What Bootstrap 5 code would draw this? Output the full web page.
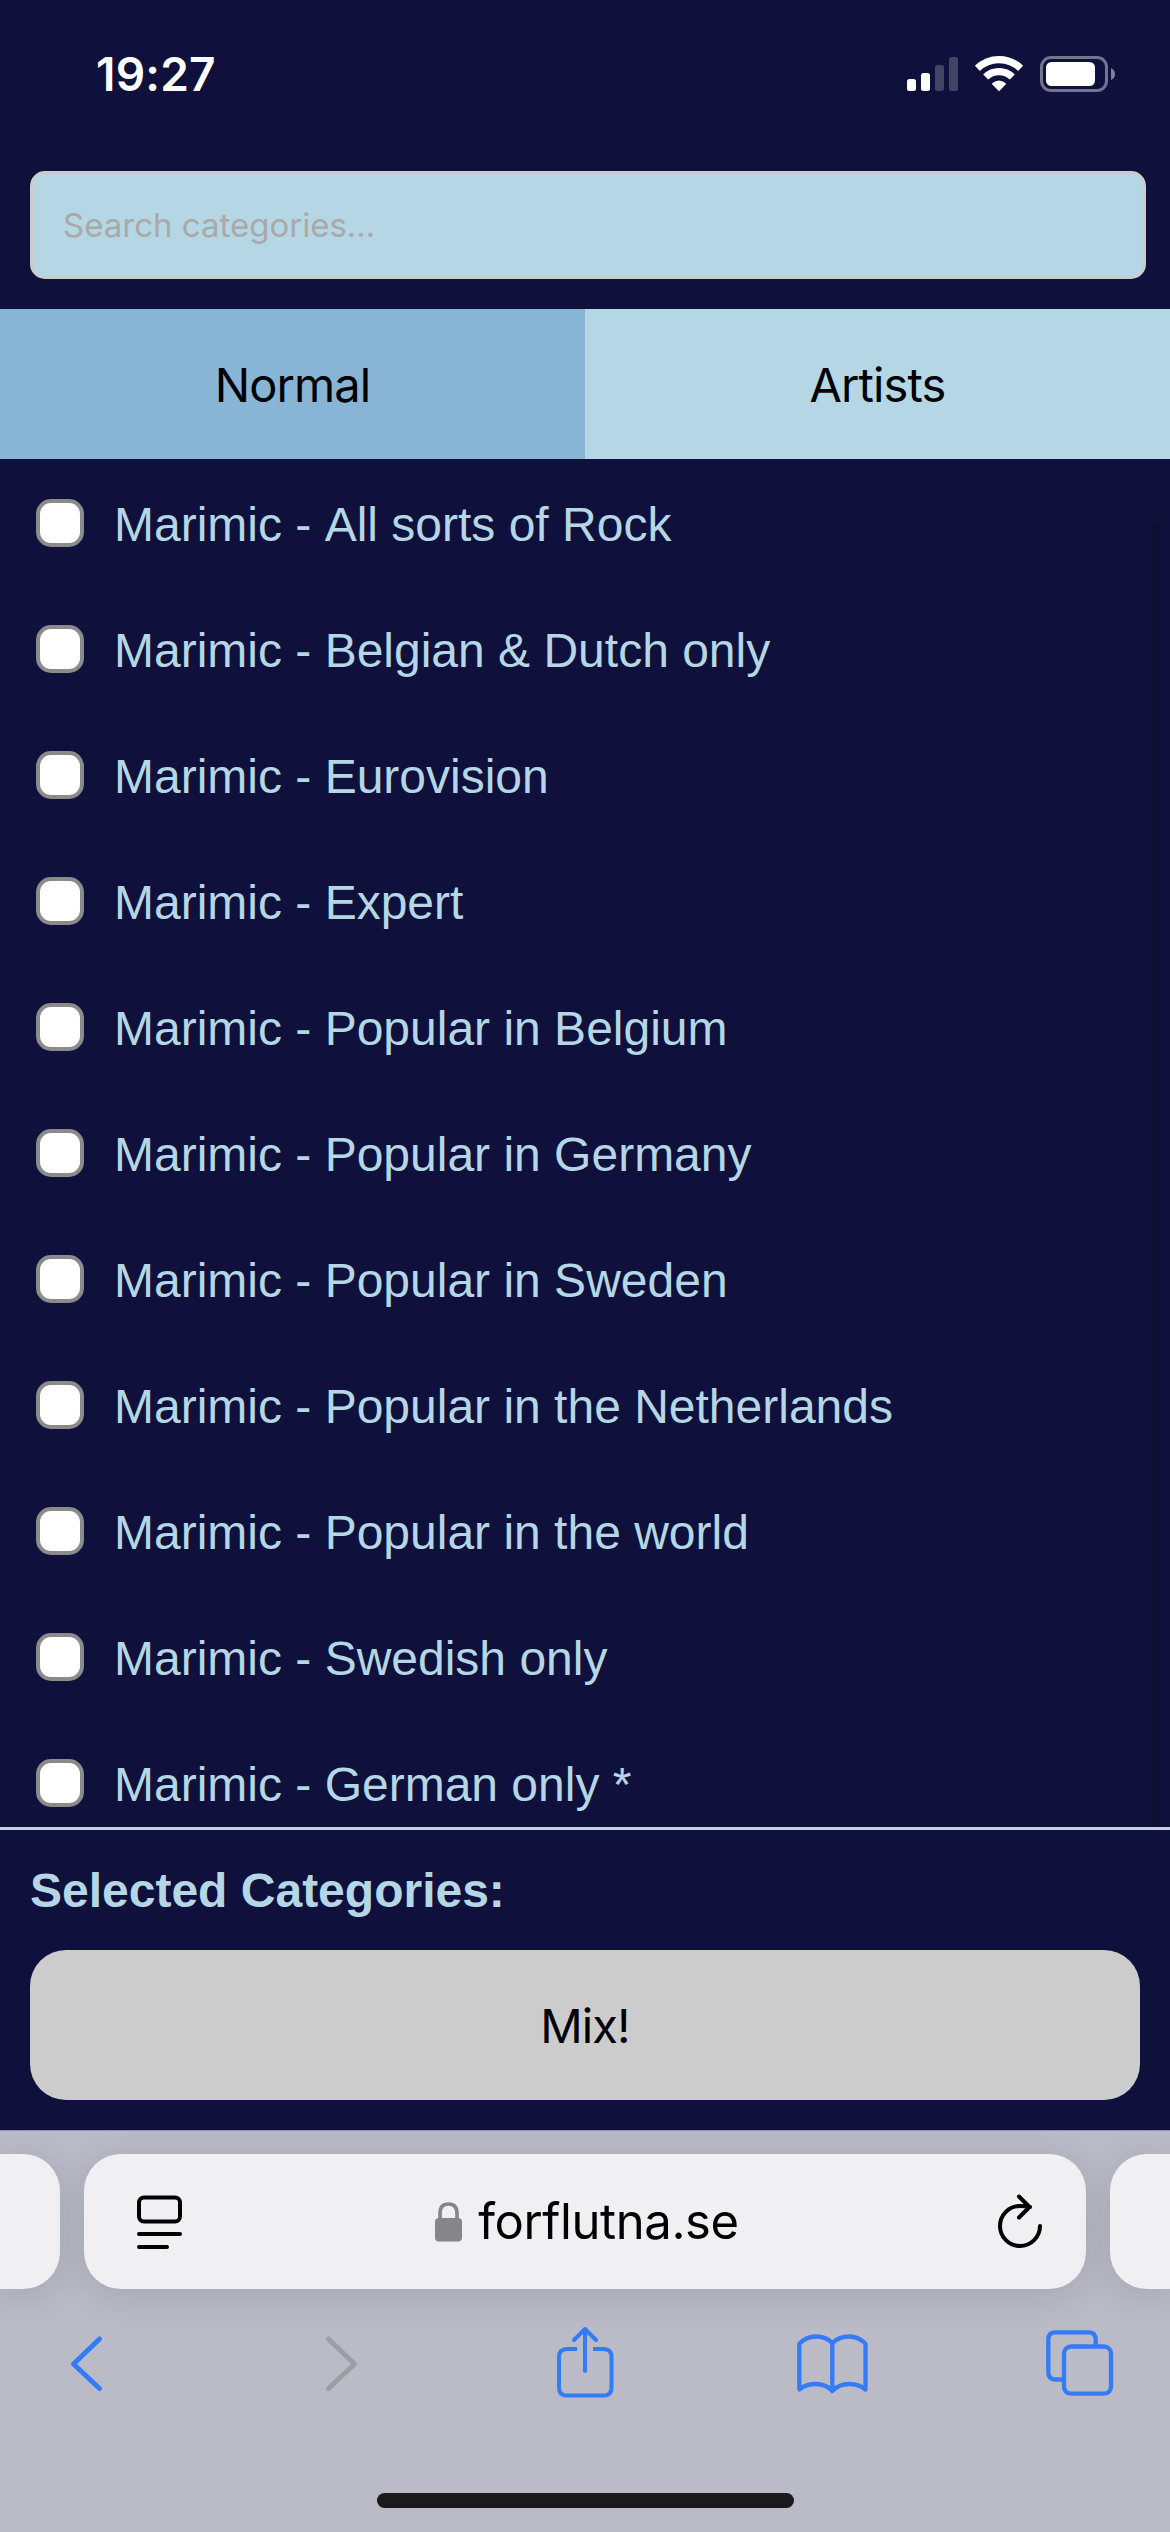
<!DOCTYPE html>
<html lang="en">
<head>
<meta charset="utf-8">
<meta name="viewport" content="width=device-width, initial-scale=1">
<title>forflutna.se</title>
<link rel="stylesheet" href="https://cdn.jsdelivr.net/npm/bootstrap@5.3.0/dist/css/bootstrap.min.css">
<style>
  :root { --night: #0f113c; --sky: #b5d6e4; --ui: Inter, Roboto, sans-serif; --web: "Liberation Sans", Arial, sans-serif; }
  body { width: 1170px; height: 2532px; background: var(--night); font-family: var(--web); font-size: 48px; line-height: 54px; overflow: hidden; }
  svg { display: block; flex: none; }
  .status-bar { height: 141px; padding: 0 54px 0 96px; }
  .clock { font: 600 46px/60px var(--ui); letter-spacing: .2px; margin-top: 44px; }
  .status-icons { margin-top: 54px; }
  .search-area { padding: 30px 24px 30px 30px; }
  .search-area .form-control { height: 108px; padding: 0 30px; border: 3px solid #ccc; border-radius: 15px; background: var(--sky); font: 400 33px/40px var(--ui); letter-spacing: 0; }
  .search-area .form-control::placeholder { color: #a9a9a9; opacity: 1; }
  .tab-strip .btn { height: 150px; border: 0; border-radius: 0; background: var(--sky); color: #000; font: 400 47px/60px var(--ui); letter-spacing: -.9px; padding-top: 8px; }
  .tab-strip .btn.active { background: #88b4d6; color: #000; }
  .categories { height: 1368px; overflow: hidden; }
  .category { height: 126px; padding: 2px 0 0 36px; gap: 30px; color: var(--sky); white-space: nowrap; font-kerning: none; }
  .category span { padding-top: 3px; }
  .category .form-check-input { width: 48px; height: 48px; margin: 0; border: 4px solid #8b8b8c; border-radius: 15px; background-color: #fff; flex: none; }
  .scroll-thumb { top: 62px; right: 9px; bottom: 0; width: 9px; border-radius: 5px 5px 0 0; background: #0e0f32; }
  .selection { height: 303px; padding: 34px 30px 30px; border-top: 3px solid var(--sky); color: var(--sky); }
  .selection h2 { font: 700 48px/54px var(--web); margin: 0 0 32px; height: 54px; }
  .mix-btn { height: 150px; border: 0; border-radius: 36px; background: #ccc; color: #000; font: 400 47px/60px var(--ui); letter-spacing: -.9px; padding-top: 8px; }
  .browser-bar { height: 402px; background: #bbbbc7; border-top: 1px solid #92929e; overflow: hidden; }
  .address-row { padding-top: 23px; gap: 24px; }
  .tab-card { height: 135px; border-radius: 37px; background: #f0f0f3; box-shadow: 0 6px 36px rgba(20,20,40,.13); }
  .tab-card.prev { width: 60px; border-radius: 0 37px 37px 0; }
  .tab-card.next { width: 60px; border-radius: 37px 0 0 37px; }
  .tab-card.current { width: 1002px; padding: 0 41px 0 50px; }
  .host { font: 400 49px/60px var(--ui); color: #000; letter-spacing: -.4px; }
  .tool-row { display: grid; grid-template-columns: 255px 232px 240px 250px 70px; height: 90px; margin-top: 30px; padding-left: 68px; color: #347bf7; }
  .home-indicator { width: 417px; height: 15px; border-radius: 8px; background: #1a1a1a; margin: 84px auto 0 377px; }
</style>
</head>
<body>
<header class="status-bar d-flex justify-content-between align-items-start text-white">
  <div class="clock">19:27</div>
  <svg class="status-icons" width="209" height="40" viewBox="907 54 209 40">
    <g fill="#fff">
      <rect x="907" y="79" width="9" height="12" rx="2.5"/><rect x="921" y="73" width="9" height="18" rx="2.5"/>
      <g opacity=".21"><rect x="935" y="65" width="9" height="26" rx="2.5"/><rect x="949" y="57" width="9" height="34" rx="2.5"/></g>
      <path d="M999 91.200 L992.300 84.400 Q991.700 83.600 992.500 83 Q999 78 1005.500 83 Q1006.300 83.600 1005.700 84.400Z"/>
    </g>
    <g fill="none" stroke="#fff" stroke-width="7.200">
      <path d="M977.400 68.300 A31 31 0 0 1 1020.600 68.300"/><path d="M985.700 77 A19 19 0 0 1 1012.300 77"/>
    </g>
    <rect x="1041.500" y="57.500" width="65" height="33" rx="9.500" fill="none" stroke="#fff" stroke-opacity=".42" stroke-width="3"/>
    <rect x="1046" y="62" width="49" height="24" rx="5.500" fill="#fff"/>
    <path d="M1111 68 Q1115 70 1115 74 Q1115 78 1111 80Z" fill="#fff" opacity=".48"/>
  </svg>
</header>

<main>
  <div class="search-area"><input type="text" class="form-control shadow-none" placeholder="Search categories..." aria-label="Search categories"></div>
  <div class="tab-strip d-flex">
    <button class="btn active w-50">Normal</button>
    <button class="btn w-50">Artists</button>
  </div>
  <div class="categories position-relative">
    <label class="category d-flex align-items-center"><input class="form-check-input" type="checkbox"><span>Marimic - All sorts of Rock</span></label>
    <label class="category d-flex align-items-center"><input class="form-check-input" type="checkbox"><span>Marimic - Belgian &amp; Dutch only</span></label>
    <label class="category d-flex align-items-center"><input class="form-check-input" type="checkbox"><span>Marimic - Eurovision</span></label>
    <label class="category d-flex align-items-center"><input class="form-check-input" type="checkbox"><span>Marimic - Expert</span></label>
    <label class="category d-flex align-items-center"><input class="form-check-input" type="checkbox"><span>Marimic - Popular in Belgium</span></label>
    <label class="category d-flex align-items-center"><input class="form-check-input" type="checkbox"><span>Marimic - Popular in Germany</span></label>
    <label class="category d-flex align-items-center"><input class="form-check-input" type="checkbox"><span>Marimic - Popular in Sweden</span></label>
    <label class="category d-flex align-items-center"><input class="form-check-input" type="checkbox"><span>Marimic - Popular in the Netherlands</span></label>
    <label class="category d-flex align-items-center"><input class="form-check-input" type="checkbox"><span>Marimic - Popular in the world</span></label>
    <label class="category d-flex align-items-center"><input class="form-check-input" type="checkbox"><span>Marimic - Swedish only</span></label>
    <label class="category d-flex align-items-center"><input class="form-check-input" type="checkbox"><span>Marimic - German only *</span></label>
    <div class="scroll-thumb position-absolute"></div>
  </div>
  <section class="selection">
    <h2>Selected Categories:</h2>
    <button class="btn mix-btn w-100">Mix!</button>
  </section>
</main>

<footer class="browser-bar">
  <div class="address-row d-flex">
    <div class="tab-card prev"></div>
    <div class="tab-card current d-flex align-items-center justify-content-between">
      <svg width="51" height="60" viewBox="134 2192 51 60" fill="none" stroke="#000" stroke-width="4" stroke-linecap="round">
        <rect x="139" y="2197.500" width="41" height="24" rx="5"/><path d="M139 2234H180M139 2247H167"/>
      </svg>
      <div class="d-flex align-items-center">
        <svg width="27" height="40" viewBox="435 2201 27 40">
          <rect x="435" y="2217" width="27" height="23.500" rx="4" fill="#86868a"/>
          <path d="M440 2219V2212.500Q440 2203 448.500 2203T457 2212.500V2219" fill="none" stroke="#86868a" stroke-width="3.600"/>
        </svg>
        <span class="host ms-3">forflutna.se</span>
      </div>
      <svg width="56" height="60" viewBox="989 2190 56 60" fill="none" stroke="#000" stroke-width="4" stroke-linecap="round" stroke-linejoin="round">
        <path d="M1040 2224A20 20 0 1 1 1020 2204Q1025 2204 1030 2205M1019 2194.500L1029.500 2205L1019 2215.500"/>
      </svg>
    </div>
    <div class="tab-card next"></div>
  </div>
  <nav class="tool-row align-items-center" aria-label="Browser tools">
    <svg width="36" height="60" viewBox="68 2334 36 60" fill="none" stroke="currentColor" stroke-width="5" stroke-linecap="round" stroke-linejoin="round"><path d="M99.500 2339L73.500 2364L99.500 2388.500"/></svg>
    <svg width="36" height="60" viewBox="323 2334 36 60" fill="none" stroke="#9d9da3" stroke-width="5" stroke-linecap="round" stroke-linejoin="round"><path d="M328.500 2339L354.500 2364L328.500 2388.500"/></svg>
    <svg width="60" height="80" viewBox="555 2324 60 80" fill="none" stroke="currentColor" stroke-width="4" stroke-linecap="round" stroke-linejoin="round">
      <path stroke-linecap="butt" d="M577 2349H567Q559 2349 559 2357V2387.500Q559 2395.500 567 2395.500H603.500Q611.500 2395.500 611.500 2387.500V2357Q611.500 2349 603.500 2349H593"/>
      <path d="M585 2371V2329.500M574 2340L585 2329L596 2340"/>
    </svg>
    <svg width="74" height="64" viewBox="795 2332 74 64" fill="none" stroke="currentColor" stroke-width="4.300" stroke-linecap="round" stroke-linejoin="round">
      <path d="M832.300 2391V2343Q826 2336.500 816 2336.500T799.300 2344V2389.500Q806 2384 816 2384T832.300 2391Q839 2384 849 2384T865.500 2389.500V2344Q859 2336.500 849 2336.500T832.300 2343"/>
    </svg>
    <svg width="70" height="70" viewBox="1045 2330 70 70" fill="none" stroke="currentColor" stroke-width="4.300">
      <path d="M1062 2380.500H1055.500Q1048.300 2380.500 1048.300 2373.300V2340.500Q1048.300 2333.300 1055.500 2333.300H1088.500Q1095.700 2333.300 1095.700 2340.500V2346"/>
      <rect x="1064" y="2347.500" width="47" height="47.200" rx="7"/>
    </svg>
  </nav>
  <div class="home-indicator"></div>
</footer>
<script src="https://cdn.jsdelivr.net/npm/bootstrap@5.3.0/dist/js/bootstrap.bundle.min.js"></script>
</body>
</html>
